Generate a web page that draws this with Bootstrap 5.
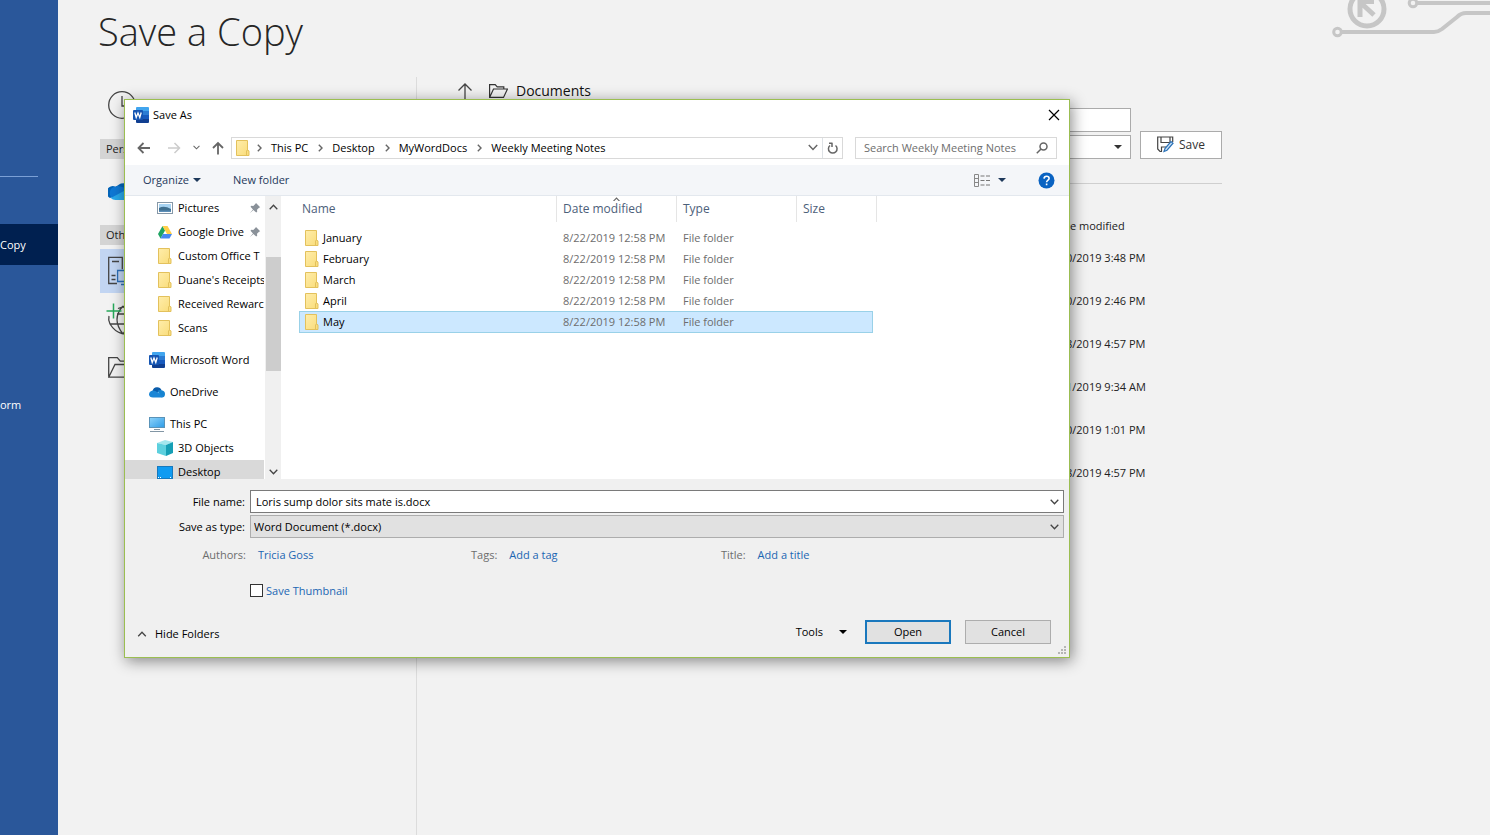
<!DOCTYPE html>
<html lang="en">
<head>
<meta charset="utf-8">
<meta name="viewport" content="width=device-width, initial-scale=1">
<title>Save As</title>
<link href="https://cdn.jsdelivr.net/npm/bootstrap@5.3.0/dist/css/bootstrap.min.css" rel="stylesheet">
<style>
  body { font-family: "Open Sans", "Noto Sans", sans-serif; font-size: 11px; line-height: 16px; color: #111; background: #f2f2f2; overflow-x: hidden; }
  button, input, select { font: inherit; color: inherit; border-radius: 0; }
  button { background: none; border: 0; padding: 0; white-space: nowrap; }
  svg { display: block; flex: none; }
  a { text-decoration: none; color: inherit; }

  /* backstage */
  .side-rail { width: 58px; background: #2a579a; color: #fff; padding-top: 176px; }
  .rail-rule { width: 38px; height: 1px; background: #7ba0d6; margin-bottom: 47px; }
  .rail-item { height: 41px; display: flex; align-items: center; }
  .rail-item.current { background: #002050; margin-bottom: 119px; }
  .backstage { padding-left: 42px; }
  .page-title { font-size: 38px; font-weight: 300; line-height: 49px; height: 77px; padding-top: 7px; margin: 0 0 0 -2px; color: #262626; }
  .panes { max-width: 1122px; }
  .places { width: 317px; border-right: 1px solid #dcdcdc; }
  .place { height: 44px; padding-left: 8px; display: flex; align-items: center; width: 100%; }
  .place.tall { height: 56px; }
  .place.spaced { margin: 9px 0 13px; }
  .place.current { background: #c2d5f2; }
  .place-head { background: #d4d4d4; height: 20px; line-height: 20px; font-size: 11px; padding-left: 6px; margin: 0; font-weight: 400; color: #222; }
  .place.tall + .place-head { margin-top: 6px; }
  .trail { font-size: 14px; height: 28px; }
  .plain-box { height: 24px; border: 1px solid #ababab; background: #fff; width: 100%; display: block; }
  .target-row { margin-top: 3px; column-gap: 9px; }
  .target-fields { row-gap: 3px; }
  .save-btn { width: 82px; height: 28px; border: 1px solid #ababab; background: #fff; color: #333; font-size: 12px; }
  .target-rule { border-color: #cfcfcf; opacity: 1; }
  .recent-dates { width: 156px; color: #222; padding-top: 10px; }
  .recent-head { padding-bottom: 2px; }
  .recent-dates li { height: 43px; line-height: 43px; white-space: nowrap; }
  .circuit { position: absolute; top: 0; right: 0; }

  /* dialog window */
  .save-window { position: absolute; left: 124px; top: 99px; width: 946px; max-width: calc(100% - 140px); background: #fff; border: 1px solid #9bbe51; box-shadow: 2px 3px 14px rgba(0,0,0,.45); color: #000; }
  .title-row { height: 30px; padding: 0 9px 0 8px; }
  .address-row { height: 35px; padding: 0 12px; }
  .nav-btn { margin-left: 12px; }
  .thin-box { height: 22px; border: 1px solid #d9d9d9; background: #fff; }
  .crumbs { margin: 0 12px 0 7px; }
  .crumb-sep { margin: 0 9px 0 10px; }
  .crumb-sep.lead-sep { margin-left: 7px; }
  .search-box { width: 202px; }
  .search-box input { border: 0; outline: 0; padding: 0; width: 166px; background: none; }
  .search-box input::placeholder { color: #6d6d6d; opacity: 1; }
  .command-row { height: 31px; background: #f4f6f9; border-bottom: 1px solid #e3e8ee; padding: 0 14px 0 18px; color: #1e395b; }
  .explorer { height: 283px; }
  .tree { width: 139px; overflow: hidden; }
  .tree a { display: flex; align-items: center; height: 24px; gap: 5px; padding-left: 32px; white-space: nowrap; position: relative; }
  .tree a.root { padding-left: 24px; margin-top: 8px; }
  .tree a.current { background: #d9d9d9; }
  .tree .pin { position: absolute; right: 3px; }
  .scroller { width: 16px; background: #f0f0f0; margin-left: 1px; }
  .scroller .thumb { width: 15px; height: 114px; background: #cdcdcd; margin-top: 47px; }
  .files { border-collapse: separate; border-spacing: 0; table-layout: fixed; width: 578px; margin-left: 18px; color: #6d6d6d; }
  .files th { font-size: 12px; font-weight: 400; color: #4c607a; height: 26px; padding: 0 0 0 6px; border-right: 1px solid #e5e5e5; position: relative; }
  .files th:first-child { padding-left: 3px; }
  .files .sorted svg { position: absolute; left: 55px; top: 0; }
  .files td { height: 21px; padding: 0 0 0 6px; white-space: nowrap; }
  .files td:first-child { color: #000; }
  .files tbody::before { content: ""; display: table-row; height: 5px; }
  .files tr.picked td { background: #cce8ff padding-box; height: 22px; box-shadow: inset 0 1px #99d1e8, inset 0 -1px #99d1e8; }
  .files tr.picked td:first-child { box-shadow: inset 0 1px #99d1e8, inset 0 -1px #99d1e8, inset 1px 0 #99d1e8; }
  .files tr.picked td:last-child { border-right: 4px solid transparent; box-shadow: inset 0 1px #99d1e8, inset 0 -1px #99d1e8, inset -1px 0 #99d1e8; }
  .details { background: #f0f0f0; padding: 11px 5px 0 0; }
  .field-row { display: grid; grid-template-columns: 125px 1fr; align-items: center; margin-bottom: 2px; }
  .field-row label { text-align: right; padding-right: 5px; white-space: nowrap; }
  .combo { position: relative; }
  .combo input, .combo select { display: block; width: 100%; height: 23px; border: 1px solid #7a7a7a; padding: 0 20px 0 5px; background: #fff; appearance: none; outline: 0; }
  .combo select { background: #e1e1e1; border-color: #adadad; padding-left: 3px; }
  .combo svg { position: absolute; right: 5px; top: 9px; pointer-events: none; }
  .meta-row { display: grid; grid-template-columns: 121px 225px 250px 1fr; height: 30px; align-items: center; white-space: nowrap; color: #6d6d6d; }
  .meta-row a { padding-left: 12px; }
  .meta-row a, .thumb-label { color: #1b66b3; }
  .thumb-label { padding-left: 3px; }
  .check-row { padding-left: 125px; height: 41px; }
  .check-row input { appearance: none; width: 13px; height: 13px; border: 1px solid #333; background: #fff; margin: 0; }
  .action-row { height: 46px; padding: 9px 13px 0 12px; align-items: flex-start; }
  .hide-btn { margin-top: 6px; }
  .push-btn { width: 86px; height: 24px; background: #e1e1e1; border: 1px solid #adadad; margin-left: 14px; }
  .push-btn.primary { border: 2px solid #1a78bd; }
  .grip { position: absolute; right: 2px; bottom: 2px; }
</style>
</head>
<body>
<svg width="0" height="0" class="position-absolute" aria-hidden="true">
  <defs>
    <linearGradient id="gFold" x2="1" y2="1"><stop offset="0" stop-color="#ffedab"/><stop offset="1" stop-color="#f9dc79"/></linearGradient>
    <linearGradient id="gScr" x2="1" y2="1"><stop offset="0" stop-color="#8fd4fb"/><stop offset="1" stop-color="#2d9be6"/></linearGradient>
  </defs>
  <symbol id="i-folder" viewBox="0 0 14 16"><path d="M.5.5h11v9.600l1.500.8v4.600H.5z" fill="url(#gFold)" stroke="#e3c15c"/><path d="M10.500 15.500v-4.800l1.500-.8" fill="none" stroke="#e3c15c"/></symbol>
  <symbol id="i-word" viewBox="0 0 16 16"><path d="M4 0h11q1 0 1 1v3.500H3V1q0-1 1-1z" fill="#41a5ee"/><path d="M3 4h13v4H3z" fill="#2b7cd3"/><path d="M3 8h13v4H3z" fill="#185abd"/><path d="M3 12h13v3q0 1-1 1H4q-1 0-1-1z" fill="#103f91"/><rect y="3" width="10" height="10" rx="1" fill="#1555b2"/><path d="M1.800 5.500l1.400 5L5 6l1.800 4.500 1.400-5" fill="none" stroke="#fff" stroke-width="1.300"/></symbol>
  <symbol id="i-cloud" viewBox="0 0 32 20"><path d="M10 5a9 9 0 0 1 15 3L12 15 2 18A6.500 6.500 0 0 1 8 6z" fill="#0364b8"/><path d="M10 5l15 4-17 10H7A6.600 6.600 0 0 1 8 6q1-.6 2-1z" fill="#0f78d4"/><path d="M18 9q4-3 7-1 7 0 7 6c0 4-3 6-6 6z" fill="#1490df"/><path d="M3 18l17-9 10 8q-2 3-5 3H8q-3 0-5-2z" fill="#28a8ea"/></symbol>
  <symbol id="i-cloud-dark" viewBox="0 0 16 12"><path d="M3.500 5A4.800 4.800 0 0 1 12.600 4.300L6 8z" fill="#0a5cab"/><path d="M8.500 5q2-1.300 4.100-.8Q16 4.800 16 8q0 3.500-3.500 3.500z" fill="#1583d0"/><path d="M0 8.500Q.3 5 4 4.600q2 0 5 1.900l5.500 4q-1 1-2.500 1H4Q.3 11.500 0 8.500z" fill="#1a86d6"/></symbol>
  <symbol id="i-pin" viewBox="0 0 12 12"><path d="M7 1l4.200 4.200-1.200.6-2 2 .2 2-1 .8L4.500 8 .7 11.300 4 7.500 1.500 4.800l.8-1 2 .2 2-2z" fill="#8a9199"/></symbol>
  <symbol id="i-chev" viewBox="0 0 9 6"><path d="M.7.8l3.800 3.900L8.300.8" fill="none" stroke="currentColor" stroke-width="1.300"/></symbol>
  <symbol id="i-next" viewBox="0 0 5 8"><path d="M.8.8L4 4 .8 7.200" fill="none" stroke="#666" stroke-width="1.400"/></symbol>
  <symbol id="i-caret" viewBox="0 0 8 4"><path d="M0 0h8L4 4z" fill="currentColor"/></symbol>
  <symbol id="i-open" viewBox="0 0 19 14"><path d="M.6 13V.6h5.600l2 2.200h6.600V5M.6 13.400L4.500 5h14l-4 8.400z" fill="none" stroke="currentColor" stroke-width="1.200"/></symbol>
</svg>

<div class="d-flex min-vh-100 position-relative">
  <nav class="side-rail flex-shrink-0" aria-label="Backstage">
    <div class="rail-rule"></div>
    <a href="#" class="rail-item current">Copy</a>
    <a href="#" class="rail-item">orm</a>
  </nav>

  <main class="backstage flex-grow-1 d-flex flex-column">
    <h1 class="page-title">Save a Copy</h1>
    <div class="panes d-flex flex-grow-1">
      <div class="places flex-shrink-0">
        <button class="place tall" aria-label="Recent"><svg width="28" height="28" fill="none" stroke="#444" stroke-width="1.300"><circle cx="14" cy="14" r="13.300"/><path d="M14 5v10h6"/></svg></button>
        <h2 class="place-head">Pers</h2>
        <button class="place spaced" aria-label="OneDrive"><svg width="30" height="19"><use href="#i-cloud"/></svg></button>
        <h2 class="place-head">Oth</h2>
        <button class="place current mt-1" aria-label="This PC"><svg width="30" height="30" fill="none" stroke="#444" stroke-width="1.300"><path d="M9 27.500H.7V1.300h13.600v12M4 5.500h7M3.500 19.500h4M3.500 23.500h4"/><path d="M20 25.500H9.600v-11H28v11H18M13 28.500h10" stroke="#2b6cb5"/></svg></button>
        <button class="place mt-1" aria-label="Add a place"><svg width="32" height="32" viewBox="2 -1 32 32" overflow="visible" fill="none" stroke="#444" stroke-width="1.300"><path d="M12 4.500q10-4.500 17 3.500t0 17q-6 6-13 4.500T4 20q-2-4-1-8M4 20h24M17 2q-12 13 0 28M17 2q12 13 0 28M11 10h18"/><path d="M7.500-.5v15M.5 7h15" stroke="#27a95a" stroke-width="1.500"/></svg></button>
        <button class="place mt-1" aria-label="Browse"><svg width="29" height="21" fill="none" stroke="#444" stroke-width="1.300"><path d="M.7 19.500V.7h8.600l3 3.500h10v3.500M.7 20.200L7 7.500h21l-6 12.700z"/></svg></button>
      </div>

      <div class="flex-grow-1 ps-4 d-flex flex-column">
        <div class="trail d-flex align-items-center ps-3">
          <svg width="16" height="19" fill="none" stroke="#444" stroke-width="1.300"><path d="M8 19V2M1.500 8.500L8 2l6.500 6.500"/></svg>
          <svg class="ms-3 me-2" width="19" height="14" color="#333"><use href="#i-open"/></svg>
          <span>Documents</span>
        </div>
        <div class="target-row d-flex align-items-end">
          <div class="target-fields flex-grow-1 d-flex flex-column">
            <input class="plain-box" type="text" aria-label="File name">
            <button class="plain-box d-flex align-items-center justify-content-end pe-2" aria-label="File type"><svg width="8" height="4" color="#333"><use href="#i-caret"/></svg></button>
          </div>
          <button class="save-btn d-flex align-items-center justify-content-center gap-1"><svg width="18" height="18" fill="none" stroke="#444" stroke-width="1.200"><path d="M5 15.500H3L.7 13V1h15v5M4 1v5.500h9V1M4.500 15.500V11h5"/><path d="M8 12.500l6-7 2 1.700-6 7-3 1.300z" stroke="#2b72b8" fill="#cfe3f5"/></svg><span>Save</span></button>
        </div>
        <hr class="target-rule my-4 ms-3">
        <div class="recent-dates ms-auto">
          <div class="recent-head">te modified</div>
          <ul class="list-unstyled m-0">
            <li>0/2019 3:48 PM</li><li>0/2019 2:46 PM</li><li>8/2019 4:57 PM</li><li>1/2019 9:34 AM</li><li>0/2019 1:01 PM</li><li>8/2019 4:57 PM</li>
          </ul>
        </div>
      </div>
    </div>
  </main>

  <svg class="circuit" width="190" height="60" fill="none" stroke="#c6c6c6" stroke-width="4" aria-hidden="true">
    <circle cx="67" cy="9" r="17" stroke-width="5"/><path d="M60 17V1.500h14M61 3l13 12" stroke-width="5"/>
    <circle cx="37.500" cy="32" r="3.800" stroke-width="3"/><path d="M42 32h92q4 0 8-3l15-12q4-4 9-4h24"/>
    <circle cx="113" cy="3" r="3.800" stroke-width="3"/><path d="M117 3h73"/>
  </svg>

  <section class="save-window" role="dialog" aria-label="Save As">
    <div class="title-row d-flex align-items-center">
      <svg width="16" height="16"><use href="#i-word"/></svg><span class="ms-1">Save As</span>
      <button class="ms-auto" aria-label="Close"><svg width="12" height="12" fill="none" stroke="#000" stroke-width="1.200"><path d="M1 1l10 10M11 1L1 11"/></svg></button>
    </div>

    <div class="address-row d-flex align-items-center">
      <button aria-label="Back"><svg width="14" height="12" fill="none" stroke="#666" stroke-width="1.800"><path d="M13 6H2M6.500 1L1.500 6l5 5"/></svg></button>
      <button class="ms-3" aria-label="Forward"><svg width="14" height="12" fill="none" stroke="#ccc" stroke-width="1.500"><path d="M1 6h11M7.500 1l5 5-5 5"/></svg></button>
      <button class="nav-btn" aria-label="Recent locations"><svg width="7" height="5" color="#666"><use href="#i-chev"/></svg></button>
      <button class="nav-btn" aria-label="Up"><svg width="12" height="14" fill="none" stroke="#666" stroke-width="1.800"><path d="M6 13.500V2M1 7l5-5 5 5"/></svg></button>
      <div class="thin-box crumbs flex-grow-1 d-flex align-items-center ps-1">
        <svg width="14" height="16"><use href="#i-folder"/></svg>
        <svg class="crumb-sep lead-sep" width="5" height="8"><use href="#i-next"/></svg><button>This PC</button>
        <svg class="crumb-sep" width="5" height="8"><use href="#i-next"/></svg><button>Desktop</button>
        <svg class="crumb-sep" width="5" height="8"><use href="#i-next"/></svg><button>MyWordDocs</button>
        <svg class="crumb-sep" width="5" height="8"><use href="#i-next"/></svg><button>Weekly Meeting Notes</button>
        <button class="ms-auto me-1" aria-label="Previous locations"><svg width="10" height="7" color="#666"><use href="#i-chev"/></svg></button>
        <button class="border-start h-100 px-1" aria-label="Refresh"><svg width="11" height="12" fill="none" stroke="#666" stroke-width="1.500"><path d="M3 3.500A4.300 4.300 0 1 0 8.500 3.500M5 1v4M2 1.200h3.500"/></svg></button>
      </div>
      <div class="thin-box search-box d-flex align-items-center justify-content-between px-2">
        <input type="search" placeholder="Search Weekly Meeting Notes" aria-label="Search Weekly Meeting Notes">
        <svg width="12" height="12" fill="none" stroke="#666" stroke-width="1.500"><circle cx="7.500" cy="4.500" r="3.500"/><path d="M5 7L.8 11.300"/></svg>
      </div>
    </div>

    <div class="command-row d-flex align-items-center">
      <button class="d-flex align-items-center gap-1">Organize <svg width="8" height="4"><use href="#i-caret"/></svg></button>
      <button class="ms-4 ps-2">New folder</button>
      <button class="ms-auto d-flex align-items-center" aria-label="Change your view">
        <svg width="16" height="13" fill="none" stroke="#888"><path d="M.5.500h4v12h-4zM.5 4.500h4M.5 8.500h4"/><path d="M6.500 2h4M12 2h4M6.500 6.500h4M12 6.500h4M6.500 11h4M12 11h4" stroke="#777"/></svg>
        <svg class="ms-2" width="8" height="4"><use href="#i-caret"/></svg></button>
      <button class="ms-4 ps-2" aria-label="Help"><svg width="17" height="17"><circle cx="8.500" cy="8.500" r="8" fill="#0a63c2"/><path d="M6 6.600q.2-2.300 2.600-2.300t2.500 2q0 1.200-1.300 2-1.200.8-1.200 2M8.600 11.600v1.600" fill="none" stroke="#fff" stroke-width="1.600"/></svg></button>
    </div>

    <div class="explorer d-flex">
      <nav class="tree flex-shrink-0" aria-label="Folders">
        <a href="#"><svg width="16" height="12"><rect x=".5" y=".5" width="15" height="11" fill="#fff" stroke="#8698a8"/><path d="M2 2h12v8H2z" fill="#a7d3f2"/><path d="M2 6q5-3 12 1v3H2z" fill="#3f6f8f"/><path d="M2 8.500h12V10H2z" fill="#5d8fb8"/></svg>Pictures<svg class="pin" width="12" height="12"><use href="#i-pin"/></svg></a>
        <a href="#"><svg width="16" height="13" viewBox="0 0 16 13"><path d="M5.500 0L1 8l2.500 4.500L8 4.500z" fill="#1fa463"/><path d="M5.500 0h5L15 8h-5z" fill="#ffcf48"/><path d="M15 8l-2.500 4.500h-9L6 8z" fill="#4688f1"/></svg>Google Drive<svg class="pin" width="12" height="12"><use href="#i-pin"/></svg></a>
        <a href="#"><svg width="16" height="16"><use href="#i-folder"/></svg>Custom Office T</a>
        <a href="#"><svg width="16" height="16"><use href="#i-folder"/></svg>Duane's Receipts</a>
        <a href="#"><svg width="16" height="16"><use href="#i-folder"/></svg>Received Rewarc</a>
        <a href="#"><svg width="16" height="16"><use href="#i-folder"/></svg>Scans</a>
        <a href="#" class="root"><svg width="16" height="16"><use href="#i-word"/></svg>Microsoft Word</a>
        <a href="#" class="root"><svg width="16" height="12"><use href="#i-cloud-dark"/></svg>OneDrive</a>
        <a href="#" class="root"><svg width="16" height="15"><rect x=".5" y=".5" width="15" height="10" fill="url(#gScr)" stroke="#5a93b8"/><path d="M5 12.500h6M1 14.500h14" stroke="#8296a5"/></svg>This PC</a>
        <a href="#"><svg width="16" height="16"><path d="M0 3l8-3 8 2-7 3z" fill="#a4e7ee"/><path d="M0 3l9 2v11l-9-3z" fill="#5dd0de"/><path d="M9 5l7-3v11l-7 3z" fill="#169fb5"/></svg>3D Objects</a>
        <a href="#" class="current"><svg width="16" height="13"><rect x=".5" y=".5" width="15" height="12" fill="#0f9bf2" stroke="#1779bd"/><path d="M1 11.500h14" stroke="#fff" stroke-dasharray="1 1 1 9 1 1"/></svg>Desktop</a>
      </nav>
      <div class="scroller d-flex flex-column align-items-center flex-shrink-0">
        <svg class="mt-2" width="9" height="6" color="#444"><use href="#i-chev" transform="rotate(180 4.500 3)"/></svg>
        <div class="thumb"></div>
        <svg class="mt-auto mb-1" width="9" height="6" color="#444"><use href="#i-chev"/></svg>
      </div>
      <div>
        <table class="files">
          <colgroup><col style="width:258px"><col style="width:120px"><col style="width:120px"><col style="width:80px"></colgroup>
          <thead><tr><th>Name</th><th class="sorted"><svg width="9" height="5" color="#666"><use href="#i-chev" transform="rotate(180 4.500 3)"/></svg>Date modified</th><th>Type</th><th>Size</th></tr></thead>
          <tbody>
            <tr><td><span class="d-flex align-items-center gap-1"><svg width="14" height="16"><use href="#i-folder"/></svg>January</span></td><td>8/22/2019 12:58 PM</td><td>File folder</td><td></td></tr>
            <tr><td><span class="d-flex align-items-center gap-1"><svg width="14" height="16"><use href="#i-folder"/></svg>February</span></td><td>8/22/2019 12:58 PM</td><td>File folder</td><td></td></tr>
            <tr><td><span class="d-flex align-items-center gap-1"><svg width="14" height="16"><use href="#i-folder"/></svg>March</span></td><td>8/22/2019 12:58 PM</td><td>File folder</td><td></td></tr>
            <tr><td><span class="d-flex align-items-center gap-1"><svg width="14" height="16"><use href="#i-folder"/></svg>April</span></td><td>8/22/2019 12:58 PM</td><td>File folder</td><td></td></tr>
            <tr class="picked"><td><span class="d-flex align-items-center gap-1"><svg width="14" height="16"><use href="#i-folder"/></svg>May</span></td><td>8/22/2019 12:58 PM</td><td>File folder</td><td></td></tr>
          </tbody>
        </table>
      </div>
    </div>

    <form class="details" onsubmit="return false">
      <div class="field-row"><label for="fname">File name:</label><div class="combo"><input id="fname" type="text" value="Loris sump dolor sits mate is.docx"><svg width="9" height="6" color="#444"><use href="#i-chev"/></svg></div></div>
      <div class="field-row"><label for="ftype">Save as type:</label><div class="combo"><select id="ftype"><option>Word Document (*.docx)</option></select><svg width="9" height="6" color="#444"><use href="#i-chev"/></svg></div></div>
      <div class="meta-row">
        <span class="text-end">Authors:</span><a href="#">Tricia Goss</a>
        <span>Tags:<a href="#">Add a tag</a></span>
        <span>Title:<a href="#">Add a title</a></span>
      </div>
      <div class="check-row d-flex align-items-center"><input type="checkbox" id="thumbnail"><label class="thumb-label" for="thumbnail">Save Thumbnail</label></div>
      <div class="action-row d-flex">
        <button class="hide-btn d-flex align-items-center gap-2" type="button"><svg width="10" height="6" color="#444"><use href="#i-chev" transform="rotate(180 5 3)"/></svg>Hide Folders</button>
        <button class="ms-auto d-flex align-items-center gap-3 py-1 pe-1" type="button">Tools <svg width="8" height="4"><use href="#i-caret"/></svg></button>
        <button class="push-btn primary" type="button">Open</button>
        <button class="push-btn" type="button">Cancel</button>
      </div>
    </form>
    <svg class="grip" width="10" height="9" fill="#b5b5b5"><path d="M7 0h2v2H7zM4 3h2v2H4zM7 3h2v2H7zM1 6h2v2H1zM4 6h2v2H4zM7 6h2v2H7z"/></svg>
  </section>
</div>
<script src="https://cdn.jsdelivr.net/npm/bootstrap@5.3.0/dist/js/bootstrap.bundle.min.js"></script>
</body>
</html>
